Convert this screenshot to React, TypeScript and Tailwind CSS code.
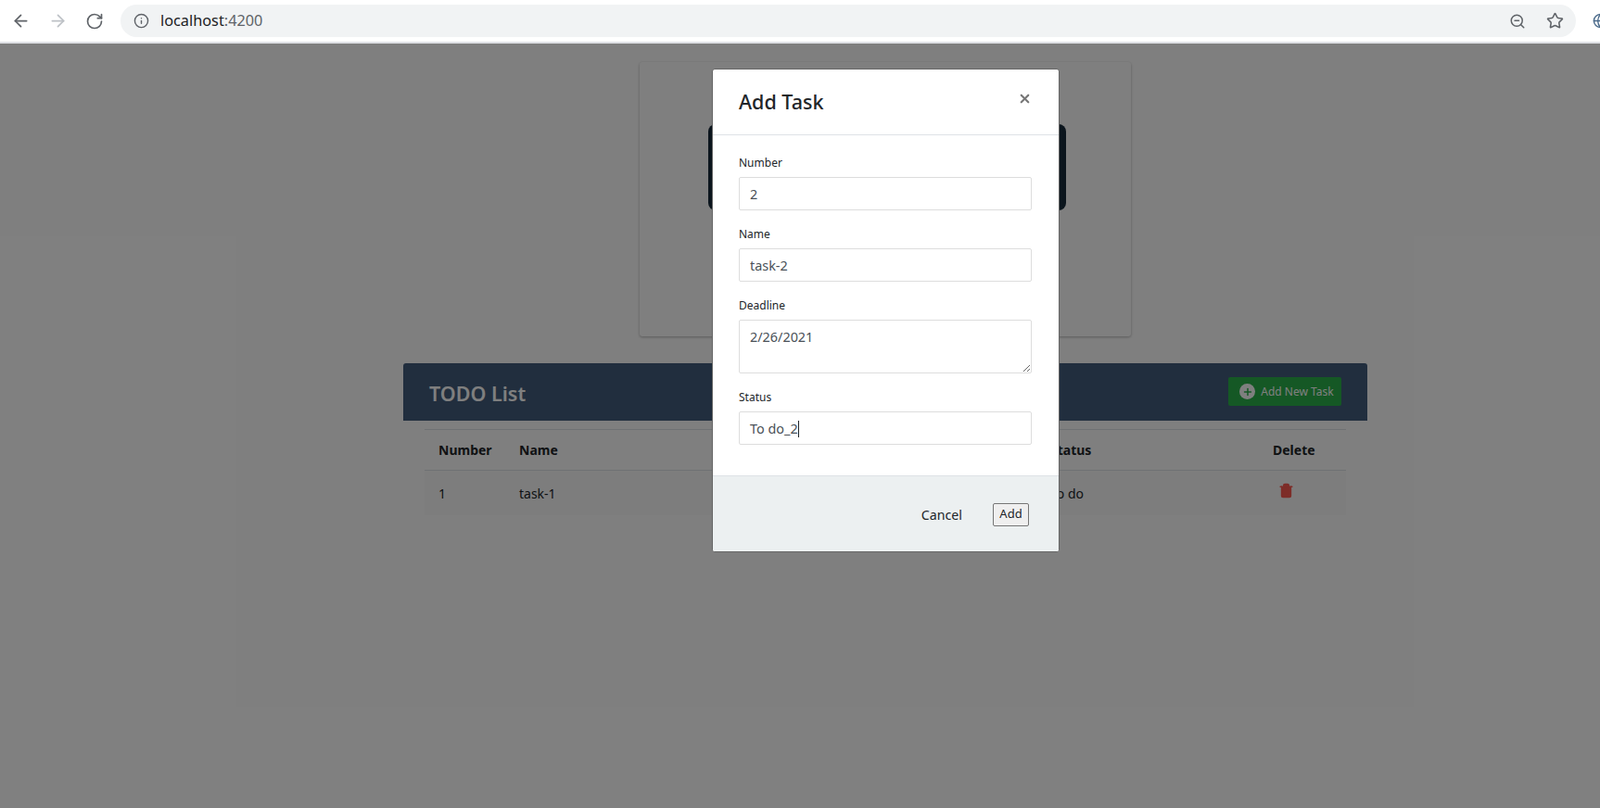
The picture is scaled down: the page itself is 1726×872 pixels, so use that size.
import React from 'react';
import { ArrowLeft, ArrowRight, RotateCw, Info, ZoomOut, Star, Globe, X, Trash2, Plus } from 'lucide-react';

const font = 'font-["Noto_Sans","Open_Sans",sans-serif]';

function BrowserBar() {
  return (
    <div className="flex h-[47px] shrink-0 items-start border-b-2 border-[#dfe1e5] bg-white">
      <div className="flex h-[45px] w-[130px] shrink-0 items-center gap-[19px] pl-[12px]">
        <ArrowLeft className="h-[21px] w-[21px] text-[#5f6368]" />
        <ArrowRight className="h-[21px] w-[21px] text-[#bdc1c6]" />
        <RotateCw className="h-[20px] w-[20px] text-[#5f6368]" />
      </div>
      <div className="mt-[5px] flex h-[35px] w-[1570px] shrink-0 items-center rounded-full bg-[#f1f3f4] pl-[14px] pr-[13px]">
        <Info className="h-[17px] w-[17px] text-[#5f6368]" />
        <span className="ml-[12px] text-[16.3px] text-[#202124]">
          localhost<span className="text-[#5f6368]">:4200</span>
        </span>
        <ZoomOut className="ml-auto h-[18px] w-[18px] text-[#5f6368]" />
        <Star className="ml-[22px] h-[19px] w-[19px] text-[#5f6368]" />
      </div>
      <Globe className="ml-[18px] mt-[14px] h-[17px] w-[17px] shrink-0 text-[#4a6a8a]" />
    </div>
  );
}

function TodoPage() {
  return (
    <div className="flex flex-col items-center pt-5">
      <div className="flex h-[296px] w-[530px] items-start justify-center rounded-[3px] bg-white pl-[4px] pt-[67px] shadow-[0_1px_3px_rgba(0,0,0,0.3)]">
        <div className="h-[93px] w-[386px] rounded-lg bg-[#162a3a]" />
      </div>

      <div className="mt-[29px] w-[1040px]">
        <div className="flex h-[62px] items-center justify-between rounded-t-[3px] bg-[#435d7d] pl-7 pr-7 pt-[2px] text-white">
          <h2 className="pt-[3px] text-[21.5px] font-semibold">TODO List</h2>
          <button className="mb-[3px] flex h-[31px] w-[122px] items-center justify-center gap-[6px] rounded-[2px] bg-[#2ab04a] pl-[4px] text-[12px] text-white">
            <span className="flex h-[17px] w-[17px] items-center justify-center rounded-full bg-white text-[#2ab04a]">
              <Plus className="h-[12px] w-[12px]" strokeWidth={3} />
            </span>
            Add New Task
          </button>
        </div>
        <div className="mx-[23px] mt-[9px] border-t border-[#dee2e6] text-[14px] text-[#212529]">
          <div className="flex h-[44px] items-center border-b border-[#dee2e6] font-bold">
            <span className="ml-[15px] w-[87px]">Number</span>
            <span className="w-[573px]">Name</span>
            <span className="w-[240px]">Status</span>
            <span>Delete</span>
          </div>
          <div className="flex h-[48px] items-center bg-[#fafafa]">
            <span className="ml-[15px] w-[87px]">1</span>
            <span className="w-[573px]">task-1</span>
            <span className="w-[240px]">To do</span>
            <Trash2 className="mb-[5px] ml-[6px] h-[17px] w-[17px] fill-[#fb5a50] text-[#fb5a50]" />
          </div>
        </div>
      </div>
    </div>
  );
}

function Field({ label, value }: { label: string; value: string }) {
  return (
    <div className="mb-4">
      <label className="mb-[6px] block pt-[1px] text-[12px] leading-[18px] text-[#212529]">{label}</label>
      <input
        readOnly
        value={value}
        className="block h-[36px] w-full rounded-[2px] border border-[#dddddd] bg-white px-[11px] text-[14.4px] text-[#495057] outline-none"
      />
    </div>
  );
}

function AddTaskModal() {
  return (
    <div className="absolute inset-0 flex justify-center bg-black/50 pt-[27px]">
      <div className="ml-[1px] h-[522px] w-[375px] overflow-hidden rounded-[3px] border border-[#666] bg-white">
        <div className="flex h-[71px] items-start justify-between border-b border-[#dee2e6] pl-7 pr-[29px] pt-[21px]">
          <h4 className="text-[21.5px] font-medium leading-[28px] text-[#212529]">Add Task</h4>
          <X className="mt-[3px] h-[15px] w-[15px] text-[#777]" strokeWidth={3.5} />
        </div>
        <div className="h-[367px] pl-7 pr-[29px] pt-5">
          <Field label="Number" value="2" />
          <Field label="Name" value="task-2" />
          <div className="mb-4">
            <label className="mb-[6px] block pt-[1px] text-[12px] leading-[18px] text-[#212529]">Deadline</label>
            <textarea
              readOnly
              value="2/26/2021"
              className="block h-[58px] w-full rounded-[2px] border border-[#dddddd] bg-white px-[11px] py-[7px] text-[14.4px] text-[#495057] outline-none"
            />
          </div>
          <div>
            <label className="mb-[6px] block pt-[1px] text-[12px] leading-[18px] text-[#212529]">Status</label>
            <div className="flex h-[36px] w-full items-center rounded-[2px] border border-[#dddddd] bg-white px-[11px] pt-[1px] text-[14.4px] text-[#495057]">
              To do_2
              <span className="h-[18px] w-px bg-[#212529]" />
            </div>
          </div>
        </div>
        <div className="flex h-[83px] items-center justify-end border-t border-[#dee2e6] bg-[#ecf0f1] pr-[32px]">
          <span className="mr-[33px] mt-[1px] text-[14.2px] text-[#212529]">Cancel</span>
          <button className="h-[25px] w-[39px] rounded-[2px] border border-[#767676] bg-[#efefef] text-[13px] text-[#212529]">Add</button>
        </div>
      </div>
    </div>
  );
}

export default function App() {
  return (
    <div className={`flex h-screen flex-col overflow-hidden bg-white ${font}`}>
      <BrowserBar />
      {/* the captured page is wider than the window, so it centres right of the middle */}
      <main className="relative w-[1910px] flex-1">
        <TodoPage />
        <AddTaskModal />
      </main>
    </div>
  );
}
